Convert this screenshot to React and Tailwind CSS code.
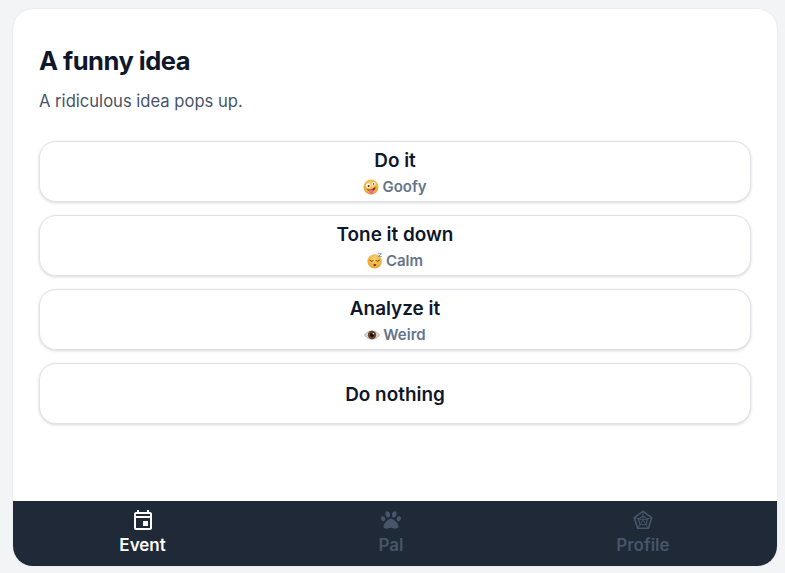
import React from "react";
import { MdOutlineEvent } from "react-icons/md";
import { FaPaw } from "react-icons/fa";

const GoofyEmoji = () => (
  <svg viewBox="0 0 16 16" className="w-[16px] h-[16px]">
    <defs>
      <radialGradient id="goofy" cx="50%" cy="35%" r="70%">
        <stop offset="0%" stopColor="#fcd66a" />
        <stop offset="100%" stopColor="#e89a2c" />
      </radialGradient>
    </defs>
    <circle cx="8" cy="8" r="7.5" fill="url(#goofy)" />
    <circle cx="5.2" cy="6.6" r="2.3" fill="#fff" />
    <circle cx="5.6" cy="6.9" r="1" fill="#3b2a1a" />
    <circle cx="10.8" cy="4.8" r="1.7" fill="#fff" />
    <circle cx="10.6" cy="5" r="0.8" fill="#3b2a1a" />
    <path d="M3.5 10 Q8 12 12.6 7.8 Q12.4 11.5 9 12 Q5 12.4 3.5 10Z" fill="#6b2a1e" />
    <path d="M6 11 Q6 15.6 8.6 15.4 Q11 15 9.8 10.4Z" fill="#ee6a8a" />
  </svg>
);

const SleepyEmoji = () => (
  <svg viewBox="0 0 16 16" className="w-[16px] h-[16px]">
    <defs>
      <radialGradient id="sleepy" cx="50%" cy="35%" r="70%">
        <stop offset="0%" stopColor="#fcd66a" />
        <stop offset="100%" stopColor="#eb9d2f" />
      </radialGradient>
    </defs>
    <circle cx="7.6" cy="8.4" r="7.2" fill="url(#sleepy)" />
    <path d="M2.8 7.4 Q4.6 9 6.2 7.8 M9 7.8 Q10.8 9 12.4 7.4" stroke="#5a3a1a" strokeWidth="0.9" fill="none" strokeLinecap="round" />
    <ellipse cx="7.8" cy="12" rx="1.5" ry="1" fill="#6b3a1e" />
    <path d="M10.8 0.8h3.6l-3 2.6h3.4" stroke="#7c8db5" strokeWidth="0.9" fill="none" />
  </svg>
);

const EyeEmoji = () => (
  <svg viewBox="0 0 16 16" className="w-[16px] h-[16px]">
    <path d="M0.3 8 Q8 -0.6 15.7 8 Q8 16.6 0.3 8Z" fill="#ddd8d2" stroke="#8b8580" strokeWidth="0.5" />
    <circle cx="8" cy="8" r="4.2" fill="#6b4426" />
    <circle cx="8" cy="8" r="2" fill="#111" />
    <circle cx="9.2" cy="6.8" r="0.7" fill="#fff" />
  </svg>
);

const RadarIcon = ({ className }) => (
  <svg viewBox="0 0 24 24" fill="none" stroke="currentColor" strokeLinejoin="round" className={className}>
    <path d="M12 2.5l9.5 7-3.6 11.5H6.1L2.5 9.5z" strokeWidth="1.8" />
    <path d="M12 7.5l5 3.7-1.9 6H8.9l-1.9-6z" strokeWidth="1.2" />
    <path d="M12 2.5V12M21.5 9.5L12 12M17.9 21L12 12M6.1 21L12 12M2.5 9.5L12 12" strokeWidth="1" />
  </svg>
);

const choices = [
  { title: "Do it", trait: "Goofy", Emoji: GoofyEmoji },
  { title: "Tone it down", trait: "Calm", Emoji: SleepyEmoji },
  { title: "Analyze it", trait: "Weird", Emoji: EyeEmoji },
  { title: "Do nothing" },
];

const tabs = [
  { label: "Event", Icon: MdOutlineEvent, active: true, size: "w-[24px] h-[24px]" },
  { label: "Pal", Icon: FaPaw, size: "w-[20px] h-[20px]" },
  { label: "Profile", Icon: RadarIcon, size: "w-[22px] h-[22px]" },
];

export default function App() {
  return (
    <div className="h-[573px] bg-[#f3f4f6] pl-[13px] pr-[8px] pt-[9px] pb-[7px] font-['Inter',sans-serif]">
      <div className="h-full flex flex-col bg-white rounded-[20px] overflow-hidden shadow-[0_0_2px_rgba(0,0,0,0.1)]">
        {/* Event content */}
        <div className="flex-1 px-[26px] pt-[35px]">
          <h1 className="text-[25.5px] leading-[34px] font-bold text-[#0f172a] tracking-[-0.5px]">A funny idea</h1>
          <p className="mt-[11px] text-[16.6px] leading-[24px] text-[#475569]">A ridiculous idea pops up.</p>
          <div className="mt-[28px] flex flex-col gap-[13px]">
            {choices.map(({ title, trait, Emoji }) => (
              <button
                key={title}
                className="h-[61px] pt-[3px] flex flex-col items-center justify-center bg-white rounded-[17px] border-[1.5px] border-[#dfe3e8] shadow-[0_1px_3px_rgba(0,0,0,0.16)]"
              >
                <span className="text-[18.9px] leading-[26px] font-semibold text-[#0f172a]">{title}</span>
                {trait && (
                  <span className="mt-[2px] flex items-center gap-[3px] text-[15px] leading-[22px] font-semibold text-[#64748b]">
                    <Emoji />
                    {trait}
                  </span>
                )}
              </button>
            ))}
          </div>
        </div>

        {/* Bottom nav */}
        <nav className="h-[65px] flex justify-around pr-[1px] bg-[#1f2937]">
          {tabs.map(({ label, Icon, active, size }) => (
            <div
              key={label}
              className={`flex flex-col items-center pt-[7px] ${active ? "text-white" : "text-[#475569]"}`}
            >
              <div className="h-[24px] flex items-center justify-center">
                <Icon className={size} />
              </div>
              <span className="mt-[1px] text-[17px] leading-[24px] font-semibold">{label}</span>
            </div>
          ))}
        </nav>
      </div>
    </div>
  );
}
